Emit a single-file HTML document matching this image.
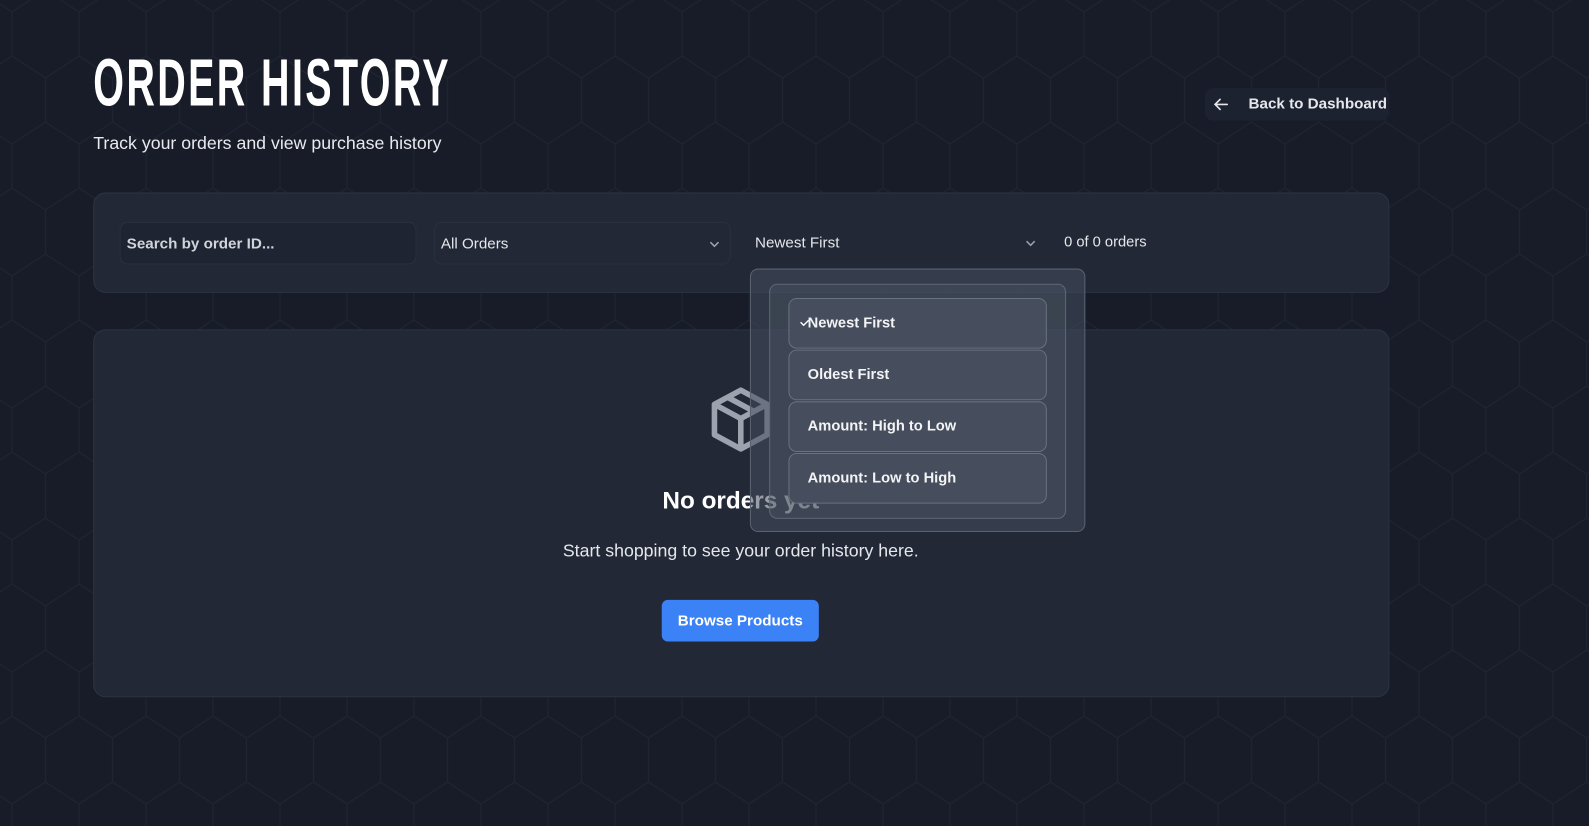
<!DOCTYPE html>
<html><head><style>
*{box-sizing:border-box;margin:0;padding:0}
body{width:1589px;height:826px;overflow:hidden;background:#171c28;font-family:"Liberation Sans",sans-serif;color:#fff;position:relative}
.wrap{position:absolute;left:0;top:0;width:1568px;height:815px;transform:scale(1.0134);transform-origin:0 0}
.bg{position:absolute;inset:0}
h1{position:absolute;left:92px;top:48px;font-family:"Liberation Sans Narrow","Liberation Sans",sans-serif;font-weight:700;font-size:66px;letter-spacing:4px;line-height:66px;transform:scaleX(0.59);transform-origin:left;white-space:nowrap}
.sub{position:absolute;left:92px;top:131px;font-size:17.5px;color:#e8eaee}
.back{position:absolute;left:1189px;top:87px;width:182px;height:32px;border-radius:8px;background:#1c2230;font-size:15px;font-weight:700;color:#e5e7eb}
.back span{position:absolute;left:43px;top:7px}
.card{position:absolute;background:#222836;border:1px solid #2c3342;border-radius:12px}
.field{position:absolute;top:219px;height:42px;border-radius:8px;font-size:15px;color:#e5e7eb}
.field span{position:absolute;left:6px;top:12px}
.chev{position:absolute;right:8px;top:14px}
.dd{position:absolute;left:740px;top:265px;width:331px;height:260px;border-radius:8px;background:rgba(70,78,95,0.55);border:1px solid #5a6272}
.dd2{position:absolute;left:759px;top:280px;width:293px;height:232px;border-radius:8px;background:rgba(80,88,104,0.35);border:1px solid #5f6778}
.opt{position:absolute;left:778px;width:255px;height:50px;border-radius:8px;background:#464d5c;border:1px solid #69717f;font-size:14.5px;font-weight:700;color:#f3f4f6}
.opt span{position:absolute;left:18px;top:16px}
.btn{position:absolute;left:653px;top:592px;width:155px;height:41px;border-radius:6px;background:#3b82f6;font-size:15px;font-weight:700;text-align:center;line-height:41px}
</style></head><body>
<svg class="bg" width="1589" height="826"><defs><pattern id="h" width="67" height="132" patternUnits="userSpaceOnUse" x="12" y="-10"><path d="M0 22 L33.5 0 L67 22 M0 22 V66 L33.5 88 L67 66 V22 M33.5 88 V132" fill="none" stroke="#1f2431" stroke-width="1.2"/></pattern></defs><rect width="1589" height="826" fill="url(#h)"/></svg>
<div class="wrap">
<h1>ORDER HISTORY</h1>
<div class="sub">Track your orders and view purchase history</div>
<div class="back"><svg style="position:absolute;left:8px;top:8px" width="16" height="16" viewBox="0 0 16 16" fill="none" stroke="#e5e7eb" stroke-width="1.6" stroke-linecap="round"><path d="M14 8H2M7 3L2 8l5 5"/></svg><span>Back to Dashboard</span></div>
<div class="card" style="left:92px;top:190px;width:1279px;height:99px"></div>
<div class="field" style="left:118px;width:293px;background:#1e2431;border:1px solid #283040;font-weight:700;color:#d1d5db"><span>Search by order ID...</span></div>
<div class="field" style="left:428px;width:293px;border:1px solid #283040"><span>All Orders</span><svg class="chev" width="14" height="14" viewBox="0 0 14 14" fill="none" stroke="#9ca3af" stroke-width="1.5"><path d="M3 5l4 4 4-4"/></svg></div>
<div class="field" style="left:739px;width:293px"><span>Newest First</span><svg class="chev" width="14" height="14" viewBox="0 0 14 14" fill="none" stroke="#9ca3af" stroke-width="1.5"><path d="M3 5l4 4 4-4"/></svg></div>
<div style="position:absolute;left:1050px;top:231px;font-size:14.5px;color:#e5e7eb">0 of 0 orders</div>
<div class="card" style="left:92px;top:325px;width:1279px;height:363px"></div>
<svg style="position:absolute;left:700px;top:381px" width="62" height="66" viewBox="0 0 62 66" fill="none" stroke="#9ca3af" stroke-width="5.5" stroke-linejoin="round"><path d="M31 4L57 18V48L31 62L5 48V18Z M5 18L31 32L57 18 M31 32V62 M18 11L44 25"/></svg>
<div style="position:absolute;left:0;width:1462px;top:481px;text-align:center;font-size:24px;font-weight:700">No orders yet</div>
<div style="position:absolute;left:0;width:1462px;top:533px;text-align:center;font-size:17.5px;color:#e5e7eb">Start shopping to see your order history here.</div>
<div class="btn">Browse Products</div>
<div class="dd"></div><div class="dd2"></div>
<div class="opt" style="top:294px"><svg style="position:absolute;left:10px;top:20px" width="10" height="8" viewBox="0 0 10 8" fill="none" stroke="#fff" stroke-width="1.4"><path d="M1 3l3 3 5-5"/></svg><span>Newest First</span></div>
<div class="opt" style="top:345px"><span>Oldest First</span></div>
<div class="opt" style="top:396px"><span>Amount: High to Low</span></div>
<div class="opt" style="top:447px"><span>Amount: Low to High</span></div>
</div>
</body></html>
